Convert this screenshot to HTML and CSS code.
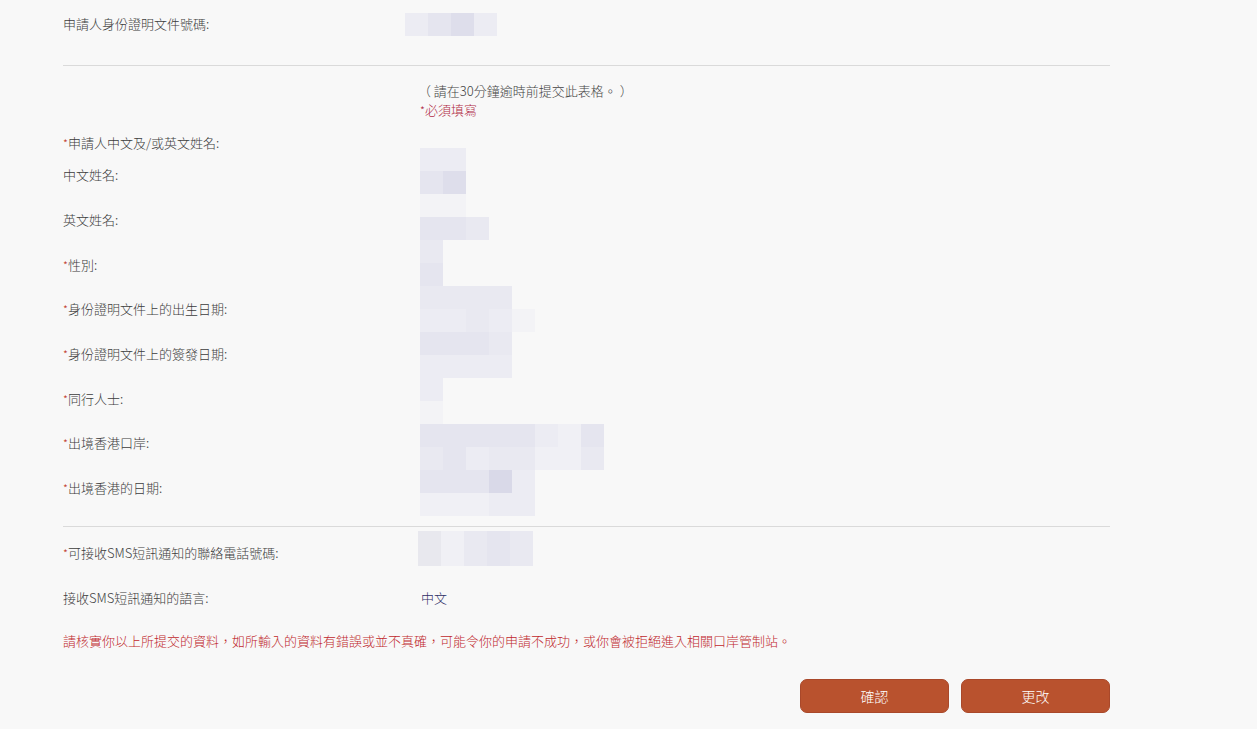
FILE: index.html
```html
<!DOCTYPE html>
<html lang="zh-Hant">
<head>
<meta charset="utf-8">
<title>確認資料</title>
<link rel="stylesheet" href="styles.css">
</head>
<body>
<div class="page">
  <div class="id-row">
    <div class="label">申請人身份證明文件號碼:</div>
    <div class="mosaic mosaic-id">
      <i class="m1"></i><i class="m3"></i><i class="m4"></i><i class="m1"></i>
    </div>
  </div>

  <hr class="rule rule-top">

  <div class="notes">
    <div class="note">（ 請在30分鐘逾時前提交此表格。 ）</div>
    <div class="required"><span class="star">*</span>必須填寫</div>
  </div>

  <div class="fields">
    <div class="label r1"><span class="star">*</span>申請人中文及/或英文姓名:</div>
    <div class="label indent">中文姓名:</div>
    <div class="label indent">英文姓名:</div>
    <div class="label"><span class="star">*</span>性別:</div>
    <div class="label"><span class="star">*</span>身份證明文件上的出生日期:</div>
    <div class="label"><span class="star">*</span>身份證明文件上的簽發日期:</div>
    <div class="label"><span class="star">*</span>同行人士:</div>
    <div class="label"><span class="star">*</span>出境香港口岸:</div>
    <div class="label"><span class="star">*</span>出境香港的日期:</div>

    <div class="mosaic mosaic-main">
      <i class="m1"></i><i class="m1"></i><i></i><i></i><i></i><i></i><i></i><i></i>
      <i class="m3"></i><i class="m4"></i><i></i><i></i><i></i><i></i><i></i><i></i>
      <i class="f"></i><i class="f"></i><i></i><i></i><i></i><i></i><i></i><i></i>
      <i class="m3"></i><i class="m3"></i><i class="m2"></i><i></i><i></i><i></i><i></i><i></i>
      <i class="m2"></i><i></i><i></i><i></i><i></i><i></i><i></i><i></i>
      <i class="m3"></i><i></i><i></i><i></i><i></i><i></i><i></i><i></i>
      <i class="m2"></i><i class="m2"></i><i class="m2"></i><i class="m2"></i><i></i><i></i><i></i><i></i>
      <i class="m1"></i><i class="m1"></i><i class="m2"></i><i class="m1"></i><i class="f"></i><i></i><i></i><i></i>
      <i class="m3"></i><i class="m3"></i><i class="m3"></i><i class="m2"></i><i></i><i></i><i></i><i></i>
      <i class="m1"></i><i class="m1"></i><i class="m1"></i><i class="m1"></i><i></i><i></i><i></i><i></i>
      <i class="m1"></i><i></i><i></i><i></i><i></i><i></i><i></i><i></i>
      <i class="f"></i><i></i><i></i><i></i><i></i><i></i><i></i><i></i>
      <i class="m3"></i><i class="m3"></i><i class="m3"></i><i class="m3"></i><i class="m3"></i><i class="m1"></i><i class="m0"></i><i class="m3"></i>
      <i class="m2"></i><i class="m3"></i><i class="m1"></i><i class="m2"></i><i class="m2"></i><i class="m0"></i><i class="m0"></i><i class="m2"></i>
      <i class="m3"></i><i class="m3"></i><i class="m3"></i><i class="m5"></i><i class="m1"></i><i></i><i></i><i></i>
      <i class="m0"></i><i class="m0"></i><i class="m0"></i><i class="m1"></i><i class="m1"></i><i></i><i></i><i></i>
    </div>
  </div>

  <hr class="rule rule-mid">

  <div class="sms">
    <div class="label"><span class="star">*</span>可接收SMS短訊通知的聯絡電話號碼:</div>
    <div class="mosaic mosaic-phone">
      <i class="g2"></i><i class="m0"></i><i class="m2"></i><i class="m3"></i><i class="m2"></i>
    </div>
    <div class="label">接收SMS短訊通知的語言:</div>
    <div class="value-text">中文</div>
  </div>

  <p class="warning">請核實你以上所提交的資料，如所輸入的資料有錯誤或並不真確，可能令你的申請不成功，或你會被拒絕進入相關口岸管制站。</p>

  <div class="actions">
    <button class="btn" type="button">確認</button>
    <button class="btn" type="button">更改</button>
  </div>
</div>
</body>
</html>
```

FILE: styles.css
```css
html, body {
  margin: 0;
  padding: 0;
  background: #f8f8f8;
}

body {
  font-family: "Noto Sans CJK TC", "Noto Sans", "Liberation Sans", sans-serif;
  font-size: 13px;
  font-weight: 300;
  color: #3c3c3c;
  line-height: 18px;
}

.page {
  width: 1047px;
  margin-left: 63px;
  height: 729px;
  overflow: hidden;
}

.label {
  white-space: nowrap;
}

.star {
  color: #c0392b;
  font-size: 11px;
}

/* top id row */
.id-row {
  display: grid;
  grid-template-columns: 342px 1fr;
  align-items: center;
  padding-top: 12px;
  height: 24px;
}

.rule {
  border: 0;
  border-top: 1px solid #dadada;
  margin: 0;
}

.rule-top {
  margin-top: 29px;
}

.notes {
  padding-left: 357px;
  margin-top: 16px;
}

.note {
  margin-left: -2px;
  color: #444;
  white-space: pre;
}

.required {
  color: #b02a45;
  margin-top: 1px;
}

.required .star {
  color: #b02a45;
}

/* name / details grid */
.fields {
  display: grid;
  grid-template-columns: 357px 1fr;
  grid-template-rows: 21px repeat(8, 44.7px);
  align-items: center;
  margin-top: 13px;
}

.fields .label {
  grid-column: 1;
}

.mosaic-main {
  grid-column: 2;
  grid-row: 1 / span 9;
  align-self: start;
  margin-top: 15.5px;
}

.rule-mid {
  margin-top: 15.5px;
}

/* SMS rows */
.sms {
  display: grid;
  grid-template-columns: 355px 1fr;
  grid-template-rows: repeat(2, 44.7px);
  align-items: center;
  margin-top: 4px;
}

.sms .label {
  grid-column: 1;
}

.mosaic-phone {
  align-self: start;
}

.value-text {
  color: #2e2e66;
  padding-left: 3px;
}

/* mosaic (blurred personal data) */
.mosaic {
  display: grid;
  grid-auto-flow: row;
}

.mosaic i {
  display: block;
}

.mosaic-id {
  grid-template-columns: repeat(4, 23px);
  grid-auto-rows: 23px;
}

.mosaic-main {
  grid-template-columns: repeat(8, 23px);
  grid-auto-rows: 23px;
}

.mosaic-phone {
  grid-template-columns: repeat(5, 23px);
  grid-auto-rows: 35px;
}

.m0 { background: #f0f0f5; }
.m1 { background: #ececf3; }
.m2 { background: #e9e9f1; }
.m3 { background: #e5e5ef; }
.m4 { background: #dedeeb; }
.m5 { background: #d9d9e8; }
.f  { background: #f3f3f6; }
.g2 { background: #e8e8ee; }

.warning {
  margin: 11.5px 0 0;
  color: #c0282d;
  white-space: nowrap;
}

.actions {
  display: flex;
  justify-content: flex-end;
  gap: 12px;
  margin-top: 29px;
}

.btn {
  width: 149px;
  height: 34px;
  border: 1px solid #a9482a;
  border-radius: 7px;
  background: #b9522e;
  color: #fff;
  font-family: inherit;
  font-size: 14px;
  font-weight: 300;
  padding: 0;
  cursor: pointer;
}
```
